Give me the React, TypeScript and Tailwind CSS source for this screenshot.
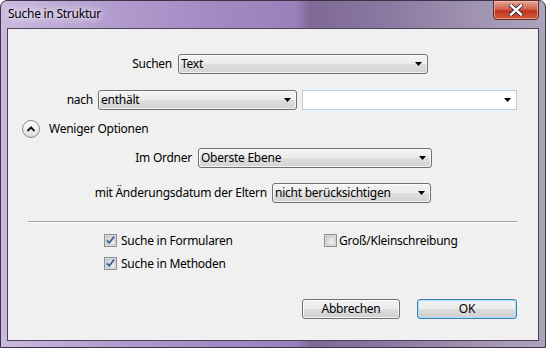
import React from "react";

function Arrow() {
  return (
    <svg width="7" height="4" viewBox="0 0 7 4" className="shrink-0">
      <path d="M0 0H7L3.5 4Z" fill="#000" />
    </svg>
  );
}

function Combo({ className, text }: { className: string; text: string }) {
  return (
    <div
      className={
        "h-[20px] rounded-[3px] border border-[#707070] bg-[linear-gradient(#f4f4f4,#ebebeb_50%,#dedede_51%,#d3d3d3)] flex items-center justify-between pl-[2px] pr-[5px] shadow-[inset_0_0_0_1px_rgba(255,255,255,0.7)] " +
        className
      }
    >
      <span className="leading-none text-black">{text}</span>
      <Arrow />
    </div>
  );
}

function CheckBox({ checked }: { checked: boolean }) {
  return (
    <svg width="13" height="13" viewBox="0 0 13 13" className="shrink-0">
      <defs>
        <linearGradient id="cbg" x1="0" y1="0" x2="1" y2="1">
          <stop offset="0" stopColor="#cbcfd5" />
          <stop offset="1" stopColor="#f6f6f6" />
        </linearGradient>
      </defs>
      <rect x="0.5" y="0.5" width="12" height="12" fill="#f4f4f4" stroke="#8e8f8f" />
      <rect x="2" y="2" width="9" height="9" fill="url(#cbg)" stroke="#b0b3b8" strokeWidth="0.8" />
      {checked && (
        <path d="M3 6.3L5.3 8.8L10 2.8" fill="none" stroke="#3d5b98" strokeWidth="1.8" strokeLinejoin="round" />
      )}
    </svg>
  );
}

function Button({ className, children, def }: { className: string; children: React.ReactNode; def?: boolean }) {
  return (
    <div
      className={
        "h-[20px] rounded-[3px] border flex items-center justify-center bg-[linear-gradient(#f2f2f2,#ebebeb_50%,#dddddd_51%,#cfcfcf)] " +
        (def
          ? "border-[#3c7fb1] shadow-[inset_0_0_0_1px_#a8e0f8] "
          : "border-[#707070] shadow-[inset_0_0_0_1px_rgba(255,255,255,0.8)] ") +
        className
      }
    >
      <span className="leading-none text-black">{children}</span>
    </div>
  );
}

export default function App() {
  return (
    <div
      className="w-[546px] h-[348px] flex flex-col rounded-t-[7px] border border-[#3b3446] bg-[linear-gradient(90deg,#cbbade_0%,#b39ccf_20%,#a389c1_40%,#9b80bb_54%,#7f6996_57%,#8b7aa2_72%,#a69bb6_92%,#aca3ba_100%)] text-[12px] tracking-[-0.25px] text-black"
      style={{ fontFamily: '"Noto Sans", "Open Sans", sans-serif' }}
    >
      <div className="h-[27px] flex items-start justify-between shrink-0">
        <div className="pl-[7px] pt-[7px] leading-none text-black [text-shadow:0_0_6px_#fff,0_0_10px_#fff]">
          Suche in Struktur
        </div>
        <div className="mr-[6px] mt-[-1px] w-[46px] h-[20px] rounded-b-[4px] border border-[#5a2d2d] bg-[linear-gradient(#e8a493,#d0624f_45%,#c0331f_55%,#d45a3c)] flex items-center justify-center shadow-[inset_0_0_0_1px_rgba(255,200,190,0.6)]">
          <svg width="14" height="12" viewBox="0 0 14 12">
            <path
              d="M2 1.5L12 10.5M12 1.5L2 10.5"
              stroke="#2b2b35"
              strokeWidth="4.2"
              strokeLinecap="square"
            />
            <path
              d="M2 1.5L12 10.5M12 1.5L2 10.5"
              stroke="#ffffff"
              strokeWidth="2.4"
              strokeLinecap="square"
            />
          </svg>
        </div>
      </div>
      <div className="mx-[6px] mb-[6px] flex-1 border border-[#4b4358] bg-[#f0f0f0] flex flex-col">
        <div className="mt-[25px] flex items-center">
          <div className="w-[164px] text-right">Suchen</div>
          <Combo className="ml-[6px] w-[250px]" text="Text" />
        </div>
        <div className="mt-[16px] flex items-center">
          <div className="w-[85px] text-right">nach</div>
          <Combo className="ml-[5px] w-[199px]" text="enthält" />
          <div className="ml-[5px] w-[215px] h-[20px] border border-[#b5cfe7] bg-white flex items-center justify-end pr-[5px]">
            <Arrow />
          </div>
        </div>
        <div className="mt-[10px] h-[18px] flex items-center pl-[14px]">
          <div className="w-[18px] h-[18px] rounded-full border border-[#8a8a8a] bg-[linear-gradient(#ffffff,#f0f0f0_50%,#dcdcdc)] flex items-center justify-center">
            <svg width="10" height="8" viewBox="0 0 10 8">
              <path d="M1.5 6L5 2.5L8.5 6" fill="none" stroke="#1a1a1a" strokeWidth="2" />
            </svg>
          </div>
          <span className="ml-[9px]">Weniger Optionen</span>
        </div>
        <div className="mt-[10px] flex items-center">
          <div className="w-[184px] text-right">Im Ordner</div>
          <Combo className="ml-[6px] w-[234px]" text="Oberste Ebene" />
        </div>
        <div className="mt-[15px] flex items-center">
          <div className="w-[259px] text-right">mit Änderungsdatum der Eltern</div>
          <Combo className="ml-[5px] w-[159px]" text="nicht berücksichtigen" />
        </div>
        <div className="mt-[18px] ml-[20px] w-[489px] h-[2px] border-t border-[#a0a0a0] border-b border-b-white" />
        <div className="mt-[11px] ml-[96px] grid grid-cols-[220px_1fr] gap-y-[10px]">
          <div className="h-[13px] flex items-center">
            <CheckBox checked />
            <span className="ml-[4px] whitespace-nowrap">Suche in Formularen</span>
          </div>
          <div className="h-[13px] flex items-center">
            <CheckBox checked={false} />
            <span className="ml-[2px] whitespace-nowrap">Groß/Kleinschreibung</span>
          </div>
          <div className="h-[13px] flex items-center">
            <CheckBox checked />
            <span className="ml-[4px] whitespace-nowrap">Suche in Methoden</span>
          </div>
        </div>
        <div className="mt-[29px] flex justify-end pr-[21px]">
          <Button className="w-[98px]">Abbrechen</Button>
          <Button className="ml-[17px] w-[100px]" def>
            OK
          </Button>
        </div>
      </div>
    </div>
  );
}
